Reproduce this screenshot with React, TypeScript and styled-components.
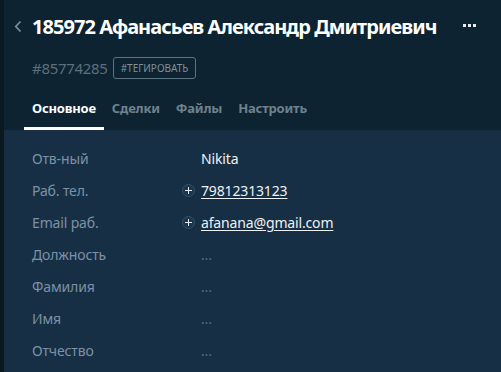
import styled, { createGlobalStyle } from "styled-components"

const GlobalStyle = createGlobalStyle`
  html, body {
    margin: 0;
    padding: 0;
    background: #172f44;
    font-family: "Noto Sans", "Open Sans", sans-serif;
  }
`

const Page = styled.div`
  display: flex;
  width: 501px;
  height: 372px;
  overflow: hidden;
`

const Strip = styled.div`
  width: 4px;
  flex: none;
  background: #0a1822;
`

const Card = styled.div`
  flex: 1;
  display: flex;
  flex-direction: column;
`

const Header = styled.div`
  background: #0e2331;
  padding: 12px 25px 0 10px;
`

const TitleRow = styled.div`
  display: flex;
  align-items: center;
  height: 28px;
`

const Back = styled.button`
  width: 18px;
  height: 28px;
  padding: 0;
  border: 0;
  background: none;
  display: flex;
  align-items: center;
  color: #7b8c98;
`

const Title = styled.h1`
  flex: 1;
  min-width: 0;
  margin: 0;
  font-size: 20px;
  font-weight: 700;
  letter-spacing: -0.95px;
  color: #ffffff;
  white-space: nowrap;
`

const More = styled.div`
  display: flex;
  gap: 2px;
  padding-bottom: 2px;
  span {
    width: 3px;
    height: 3px;
    background: #e6ecf0;
  }
`

const MetaRow = styled.div`
  display: flex;
  align-items: center;
  gap: 5px;
  margin: 17px 0 0 18px;
`

const Id = styled.span`
  font-size: 15px;
  letter-spacing: -0.3px;
  color: #5c6f7c;
`

const Tag = styled.span`
  border: 1px solid #5c7382;
  border-radius: 3px;
  padding: 3px 7px;
  font-size: 10px;
  line-height: 14px;
  color: #7f909b;
  text-transform: uppercase;
`

const Tabs = styled.div`
  display: flex;
  gap: 16px;
  margin: 20px 0 0 18px;
`

const Tab = styled.div<{ $active?: boolean }>`
  padding: 0 8px 10px;
  margin: 0 -8px;
  font-size: 13px;
  font-weight: 700;
  letter-spacing: -0.2px;
  color: ${(p) => (p.$active ? "#ffffff" : "#6e818d")};
  border-bottom: 3px solid ${(p) => (p.$active ? "#ffffff" : "transparent")};
`

const Fields = styled.div`
  padding: 12px 0 0 28px;
  display: flex;
  flex-direction: column;
`

const Row = styled.div`
  display: grid;
  grid-template-columns: 150px 19px 1fr;
  align-items: center;
  height: 32px;
  font-size: 14px;
  letter-spacing: -0.15px;
`

const Label = styled.span`
  color: #7b92a6;
`

const Plus = styled.span`
  width: 13px;
  height: 13px;
  box-sizing: border-box;
  border-radius: 50%;
  border: 1px solid #34506a;
  background: #1b354b;
  color: #e3e8ec;
  display: flex;
  align-items: center;
  justify-content: center;
`

const Value = styled.span<{ $link?: boolean; $empty?: boolean }>`
  color: ${(p) => (p.$empty ? "#4f6a80" : "#eef1f4")};
  text-decoration: ${(p) => (p.$link ? "underline" : "none")};
  text-underline-offset: 2px;
`

const fields: { label: string; value: string; link?: boolean }[] = [
  { label: "Отв-ный", value: "Nikita" },
  { label: "Раб. тел.", value: "79812313123", link: true },
  { label: "Email раб.", value: "afanana@gmail.com", link: true },
  { label: "Должность", value: "" },
  { label: "Фамилия", value: "" },
  { label: "Имя", value: "" },
  { label: "Отчество", value: "" },
]

const App = () => {
  return (
    <>
      <GlobalStyle />
      <Page>
        <Strip />
        <Card>
          <Header>
            <TitleRow>
              <Back>
                <svg width="8" height="13" viewBox="0 0 8 13">
                  <path d="M6.5 1.5 L1.8 6.5 L6.5 11.5" fill="none" stroke="currentColor" strokeWidth="1.8" />
                </svg>
              </Back>
              <Title>185972 Афанасьев Александр Дмитриевич</Title>
              <More>
                <span />
                <span />
                <span />
              </More>
            </TitleRow>
            <MetaRow>
              <Id>#85774285</Id>
              <Tag>#Тегировать</Tag>
            </MetaRow>
            <Tabs>
              <Tab $active>Основное</Tab>
              <Tab>Сделки</Tab>
              <Tab>Файлы</Tab>
              <Tab>Настроить</Tab>
            </Tabs>
          </Header>
          <Fields>
            {fields.map((f) => (
              <Row key={f.label}>
                <Label>{f.label}</Label>
                {f.link ? (
                  <Plus>
                    <svg width="7" height="7" viewBox="0 0 7 7">
                      <path d="M3.5 0 V7 M0 3.5 H7" stroke="currentColor" strokeWidth="1" />
                    </svg>
                  </Plus>
                ) : (
                  <span />
                )}
                <Value $link={f.link} $empty={!f.value}>
                  {f.value || "..."}
                </Value>
              </Row>
            ))}
          </Fields>
        </Card>
      </Page>
    </>
  )
}

export default App
